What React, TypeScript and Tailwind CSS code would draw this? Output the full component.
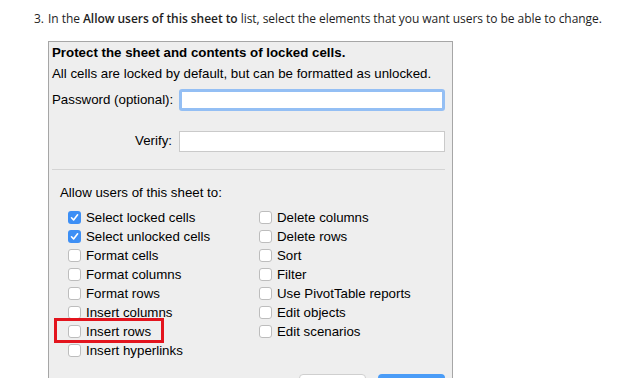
const left = [
  { label: 'Select locked cells', checked: true },
  { label: 'Select unlocked cells', checked: true },
  { label: 'Format cells', checked: false },
  { label: 'Format columns', checked: false },
  { label: 'Format rows', checked: false },
  { label: 'Insert columns', checked: false },
  { label: 'Insert rows', checked: false, marked: true },
  { label: 'Insert hyperlinks', checked: false },
];

const right = [
  'Delete columns',
  'Delete rows',
  'Sort',
  'Filter',
  'Use PivotTable reports',
  'Edit objects',
  'Edit scenarios',
];

const Box = ({ checked }: { checked: boolean }) =>
  checked ? (
    <span className="flex h-[13px] w-[13px] shrink-0 items-center justify-center rounded-[3px] bg-[#3d8ff5]">
      <svg width="9" height="9" viewBox="0 0 9 9" fill="none">
        <path d="M1.5 4.8 L3.6 7 L7.6 1.8" stroke="white" strokeWidth="1.6" strokeLinecap="round" strokeLinejoin="round" />
      </svg>
    </span>
  ) : (
    <span className="h-[13px] w-[13px] shrink-0 rounded-[3px] border border-[#bdbdbd] bg-white" />
  );

const Row = ({ label, checked, marked }: { label: string; checked: boolean; marked?: boolean }) => (
  <div className="relative flex h-[19px] items-center gap-[5px]">
    <Box checked={checked} />
    <span>{label}</span>
    {marked && <div className="absolute left-[-14px] top-[-4px] h-[25px] w-[110px] border-[3px] border-[#e3141d]" />}
  </div>
);

export default function App() {
  return (
    <div className="h-[378px] w-[624px] overflow-hidden bg-white">
      <div
        className="flex whitespace-nowrap pt-[9px] text-[12px] leading-[20px] tracking-[-0.05px] text-[#1e1e1e]"
        style={{ fontFamily: '"Open Sans", "Noto Sans", sans-serif' }}
      >
        <span className="w-[48px] pl-[34px]">3.</span>
        <span>
          In the <b className="font-semibold">Allow users of this sheet to</b> list, select the elements that you want users to be able to change.
        </span>
      </div>

      <div
        className="ml-[48px] mt-[12px] w-[405px] border border-[#a6a6a6] bg-[#eeeeee] pl-[3px] pr-[7px] text-[13.3px] text-black"
        style={{ fontFamily: '"Liberation Sans", Arial, sans-serif' }}
      >
        <div className="flex h-[21px] items-center pt-[1px] font-bold">Protect the sheet and contents of locked cells.</div>
        <div className="flex h-[22px] items-center">All cells are locked by default, but can be formatted as unlocked.</div>

        <div className="flex h-[30px] items-center">
          <span className="w-[127px]">Password (optional):</span>
          <div className="h-[22px] flex-1 rounded-[3px] border-[3px] border-[#94bff4] bg-white" />
        </div>
        <div className="mt-[11px] flex h-[30px] items-center">
          <span className="w-[127px] pr-[7px] text-right">Verify:</span>
          <div className="h-[21px] flex-1 border border-[#cacaca] bg-white" />
        </div>

        <div className="mt-[13px] h-px bg-[#d4d4d4]" />

        <div className="mt-[14px] flex h-[18px] items-center pl-[8px]">Allow users of this sheet to:</div>

        <div className="mt-[6px] flex pl-[16px]">
          <div className="w-[191px]">
            {left.map((r) => (
              <Row key={r.label} label={r.label} checked={r.checked} marked={r.marked} />
            ))}
          </div>
          <div>
            {right.map((r) => (
              <Row key={r} label={r} checked={false} />
            ))}
          </div>
        </div>

        <div className="mt-[14px] flex justify-end gap-[12px]">
          <div className="h-[22px] w-[67px] rounded-[4px] border border-[#cfcfcf] bg-white" />
          <div className="h-[22px] w-[67px] rounded-[4px] bg-[#4a9cf7]" />
        </div>
      </div>
    </div>
  );
}
